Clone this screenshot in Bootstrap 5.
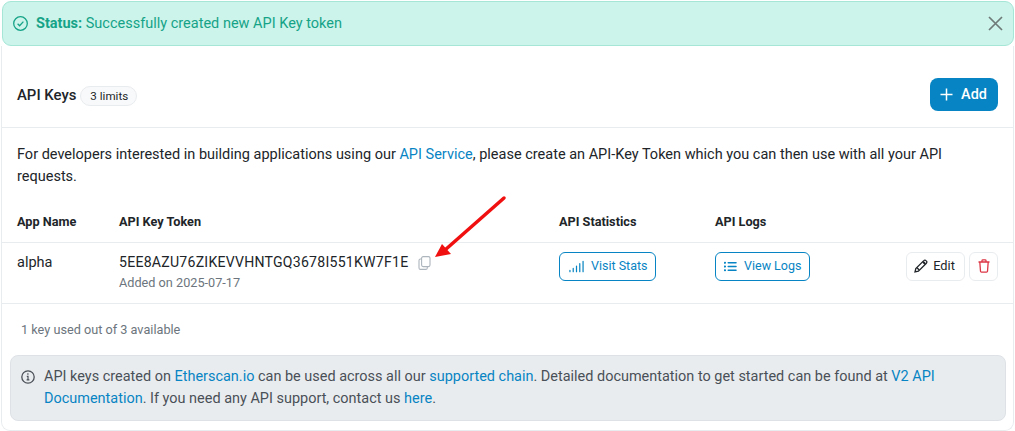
<!DOCTYPE html>
<html lang="en">
<head>
<meta charset="utf-8">
<title>API Keys</title>
<link href="https://cdn.jsdelivr.net/npm/bootstrap@5.3.0/dist/css/bootstrap.min.css" rel="stylesheet">
<style>
html,body{height:431px;overflow:hidden;}
body{font-family:Roboto,sans-serif;font-size:14.5px;line-height:21.6px;color:#212529;background:#fff;padding:1px 1px 0 2px;position:relative;}
a{color:#0784c3;text-decoration:none;}
.ok-alert{height:45px;padding:0 10px;background:#ccf4ea;border:1px solid #a5e6d6;border-radius:9px;color:#15a388;}
.ok-alert b{font-weight:700;}
.ok-close{border:0;background:none;padding:0;width:15px;height:15px;margin-right:0;line-height:0;}
.key-panel{margin:0 0 0 -1px;height:385px;border:1px solid #e9ecef;border-top:0;border-radius:0 0 9px 9px;background:#fff;}
.panel-head{height:82px;padding:16px 15px 0;border-bottom:1px solid #e9ecef;}
.panel-head h2{font-size:14.9px;font-weight:500;margin:0;line-height:20px;color:#212529;}
.limit-pill{font-size:11.6px;line-height:16px;padding:1px 8px 1px 9px;background:#f8f9fa;border:1px solid #e9ecef;border-radius:20px;margin-left:4px;margin-top:3px;color:#212529;font-weight:400;}
.add-btn{width:68px;height:33px;background:#0784c3;color:#fff;border:0;border-radius:8px;font-weight:500;font-size:14.4px;padding:0 1px 0 0;}
.intro{padding:16px 15px 0;margin:0;line-height:22px;height:85px;}
.keys{width:100%;margin:0;table-layout:fixed;}
.keys th{font-size:12.7px;font-weight:700;height:29px;padding:0 0 0 15px;border-bottom:1px solid #e9ecef;vertical-align:top;line-height:17px;}
.keys th+th,.keys td+td{padding-left:0;}
.keys td{height:61px;padding:9px 0 0 15px;border-bottom:1px solid #e9ecef;vertical-align:top;}
.keys .tok{letter-spacing:.24px;line-height:21px;font-size:14.1px;color:#212529;}
.added{font-size:12.7px;color:#6c757d;line-height:20px;}
.out-btn{display:inline-flex;align-items:center;gap:7px;height:29px;padding:0 7px 0 9px;border:1px solid #0784c3;border-radius:6px;color:#0784c3;background:#fff;font-size:12.5px;}
.out-logs{padding:0 8px;}
.plain-btn{display:inline-flex;align-items:center;justify-content:center;height:29px;border:1px solid #e9ecef;border-radius:6px;background:#fff;color:#212529;font-size:12.8px;}
.btn-edit{width:59px;gap:5px;padding-right:2px;}
.btn-del{width:29px;}
.row-acts{padding-right:15px;}
.copy-ico{margin-left:10px;margin-top:1px;}
.note-used{margin:0;padding:16px 19px 0;font-size:12.7px;color:#6c757d;height:51px;line-height:20px;}
.note-box{margin:0 7px 0 8px;height:66px;padding:10px 10px 0;background:#e9ecef;border:1px solid #dee2e6;border-radius:8px;color:#495057;line-height:22px;font-size:14.46px;}
.note-ico{flex:none;width:14px;height:14px;margin-top:4px;margin-right:9px;}
.arrow{position:absolute;left:430px;top:194px;width:80px;height:70px;z-index:2;}
</style>
</head>
<body>
<div class="ok-alert d-flex align-items-center justify-content-between">
  <div class="d-flex align-items-center gap-2">
    <svg width="15" height="15" viewBox="0 0 15 15" fill="none" stroke="#15a388" stroke-width="1.300"><circle cx="7.500" cy="7.500" r="6.800"/><path d="M4.600 7.800l2 2 3.800-4.200"/></svg>
    <span><b>Status:</b> Successfully created new API Key token</span>
  </div>
  <button class="ok-close" aria-label="Close"><svg width="15" height="15" viewBox="0 0 15 15" stroke="#6e7a78" stroke-width="1.700"><path d="M1 1l13 13M14 1L1 14"/></svg></button>
</div>
<div class="key-panel">
  <div class="d-flex align-items-center panel-head justify-content-between">
    <div class="d-flex align-items-center"><h2>API Keys</h2><span class="limit-pill">3 limits</span></div>
    <button class="add-btn d-flex align-items-center justify-content-center gap-2">
      <svg width="13" height="13" viewBox="0 0 13 13"><path d="M6.500 .5v12M.5 6.500h12" stroke="#fff" stroke-width="1.500"/></svg>Add</button>
  </div>
  <p class="intro">For developers interested in building applications using our <a href="#">API Service</a>, please create an API-Key Token which you can then use with all your API requests.</p>
  <table class="keys">
    <colgroup><col style="width:117px"><col style="width:440px"><col style="width:156px"><col style="width:180px"><col></colgroup>
    <thead><tr><th>App Name</th><th>API Key Token</th><th>API Statistics</th><th>API Logs</th><th></th></tr></thead>
    <tbody><tr>
      <td>alpha</td>
      <td><div class="d-flex align-items-center"><span class="tok">5EE8AZU76ZIKEVVHNTGQ3678I551KW7F1E</span>
        <svg class="copy-ico" width="13" height="14" viewBox="0 0 13 14" fill="none" stroke="#adb5bd" stroke-width="1.100"><rect x="3.600" y=".6" width="8.400" height="10" rx="1.500"/><path d="M3.600 3H2.400A1.500 1.500 0 0 0 1 4.500v7.500A1.500 1.500 0 0 0 2.400 13.400h5.400A1.500 1.500 0 0 0 9.300 12v-1.300"/></svg></div>
        <div class="added">Added on 2025-07-17</div></td>
      <td><a class="out-btn" href="#">
        <svg width="15" height="13" viewBox="0 0 16 13" fill="none" stroke="#0784c3" stroke-width="1.300" stroke-linecap="round"><path d="M1 12v-1.500M4.500 12V8.500M8 12V6M11.500 12V3.500M15 12V1"/></svg>Visit Stats</a></td>
      <td><a class="out-btn out-logs" href="#">
        <svg width="13" height="11" viewBox="0 0 14 11" fill="none" stroke="#0784c3" stroke-width="1.500" stroke-linecap="round"><path d="M4.500 1.500H13M4.500 5.500H13M4.500 9.500H13"/><path d="M.8 1.500h.4M.8 5.500h.4M.8 9.500h.4" stroke-width="2"/></svg>View Logs</a></td>
      <td><div class="d-flex justify-content-end gap-1 row-acts">
        <a class="plain-btn btn-edit" href="#">
          <svg width="14" height="14" viewBox="0 0 14 14" fill="none" stroke="#212529" stroke-width="1.300"><path d="M1 13l.8-3.400L9.800 1.600a1.500 1.500 0 0 1 2.200 0l.4.4a1.500 1.500 0 0 1 0 2.200L4.400 12.200z"/><path d="M3 8.800l2.200 2.200"/><path d="M9 2.800l2.200 2.200" stroke-width="2"/></svg>Edit</a>
        <a class="plain-btn btn-del" href="#">
          <svg width="12" height="14" viewBox="0 0 12 14" fill="none" stroke="#dc3545" stroke-width="1.300"><path d="M.5 3h11M4 3V1.500A.8.8 0 0 1 4.800.8h2.400a.8.8 0 0 1 .8.700V3M1.800 3l.7 9.200a1 1 0 0 0 1 .9h5a1 1 0 0 0 1-.9L10.200 3"/></svg></a>
      </div></td>
    </tr></tbody>
  </table>
  <p class="note-used">1 key used out of 3 available</p>
  <div class="note-box d-flex">
    <svg class="note-ico" viewBox="0 0 14 14" fill="none" stroke="#495057" stroke-width="1.300"><circle cx="7" cy="7" r="6.200"/><path d="M5.800 6.300H7v3.400M5.600 9.800h2.800" stroke-width="1.200"/><path d="M6.300 4h1.200" stroke-width="1.500"/></svg>
    <div>API keys created on <a href="#">Etherscan.io</a> can be used across all our <a href="#">supported chain</a>. Detailed documentation to get started can be found at <a href="#">V2 API Documentation</a>. If you need any API support, contact us <a href="#">here</a>.</div>
  </div>
</div>
<svg class="arrow" viewBox="0 0 80 70"><path d="M74 4L15 56" stroke="#f01010" stroke-width="3.500" stroke-linecap="round"/><path d="M5 63L12 50 21 60z" fill="#f01010"/></svg>
<script src="https://cdn.jsdelivr.net/npm/bootstrap@5.3.0/dist/js/bootstrap.bundle.min.js"></script>
</body>
</html>
